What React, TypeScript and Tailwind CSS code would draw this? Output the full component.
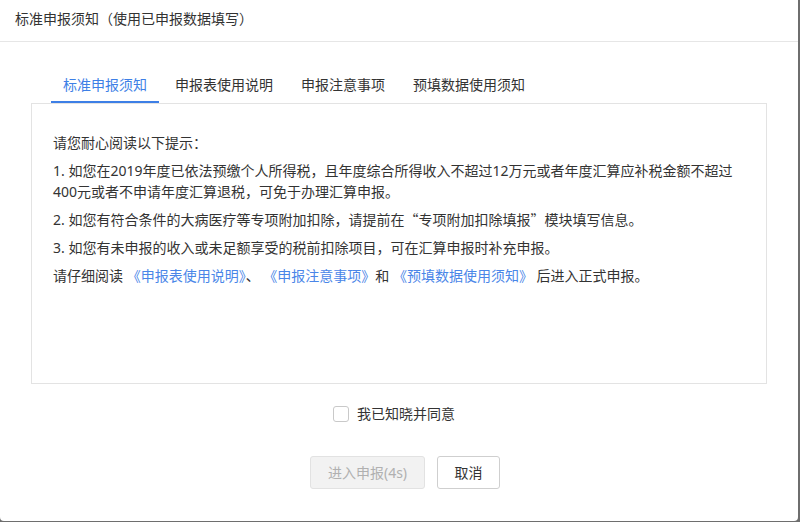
import React from "react";

const font = { fontFamily: '"Noto Sans", "Noto Sans CJK SC", sans-serif' };

export default function App() {
  const tabs = ["标准申报须知", "申报表使用说明", "申报注意事项", "预填数据使用须知"];
  return (
    <div className="w-[800px] h-[522px] bg-[#6e6e6e] overflow-hidden" style={font}>
      <div className="w-[798px] h-[521px] bg-white rounded-b-[4px] flex flex-col text-[14px] text-[#333]">
        <div className="h-[42px] border-b border-[#e6e6e6] flex items-center pl-[15px] pb-[4px] leading-[20px]">
          标准申报须知（使用已申报数据填写）
        </div>
        <div className="flex gap-[4px] ml-[51px] mt-[33px]">
          {tabs.map((t, i) => (
            <div
              key={t}
              className={
                i === 0
                  ? "px-3 pb-[6px] leading-[20px] border-b-2 border-[#3d7fe6] text-[#3d7fe6]"
                  : "px-3 pb-[6px] leading-[20px] border-b-2 border-transparent text-[#333]"
              }
            >
              {t}
            </div>
          ))}
        </div>
        <div className="mx-[31px] h-[281px] border border-[#e3e3e3] pt-[28px] px-[21px] leading-[21px]">
          <p className="mb-[7px]">请您耐心阅读以下提示：</p>
          <p className="mb-[7px]">
            1. 如您在2019年度已依法预缴个人所得税，且年度综合所得收入不超过12万元或者年度汇算应补税金额不超过
            <br />
            400元或者不申请年度汇算退税，可免于办理汇算申报。
          </p>
          <p className="mb-[7px]">
            2. 如您有符合条件的大病医疗等专项附加扣除，请提前在
            <span style={{ fontFamily: '"Noto Sans CJK SC", sans-serif' }}>“</span>
            专项附加扣除填报
            <span style={{ fontFamily: '"Noto Sans CJK SC", sans-serif' }}>”</span>
            模块填写信息。
          </p>
          <p className="mb-[7px]">3. 如您有未申报的收入或未足额享受的税前扣除项目，可在汇算申报时补充申报。</p>
          <p>
            请仔细阅读 <span className="text-[#4a86e8]">《申报表使用说明》</span>、 <span className="text-[#4a86e8]">《申报注意事项》</span>和 <span className="text-[#4a86e8]">《预填数据使用须知》</span> 后进入正式申报。
          </p>
        </div>
        <div className="flex justify-center items-center mt-[22px] pr-[10px]">
          <span className="w-[16px] h-[16px] border border-[#c9c9c9] rounded-[3px] bg-white" />
          <span className="ml-[8px] leading-[16px]">我已知晓并同意</span>
        </div>
        <div className="flex justify-center mt-[34px]">
          <button className="ml-[12px] w-[115px] h-[33px] rounded-[3px] bg-[#f2f2f2] border border-[#e2e2e2] text-[#b0b0b0] text-[14px]">
            进入申报(4s)
          </button>
          <button className="ml-[12px] w-[63px] h-[33px] rounded-[3px] bg-white border border-[#cfcfcf] text-[#333] text-[14px]">
            取消
          </button>
        </div>
      </div>
    </div>
  );
}
